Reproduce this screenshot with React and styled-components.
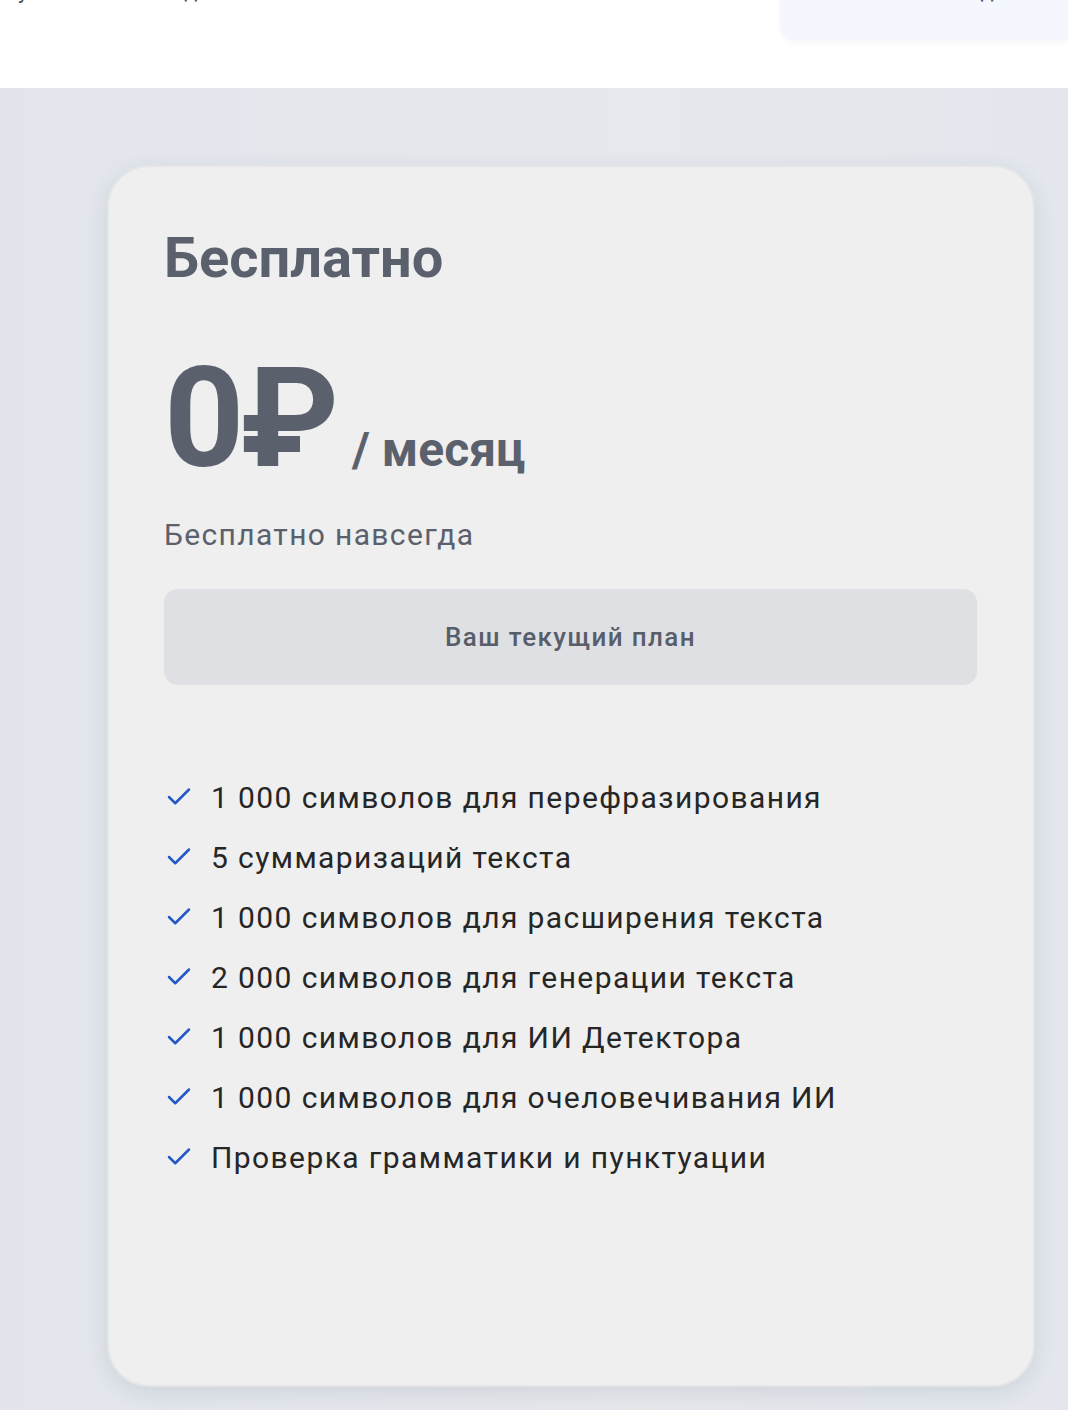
import React from 'react';
import styled, { createGlobalStyle } from 'styled-components';
import { Check } from 'lucide-react';

const GlobalStyle = createGlobalStyle`
  * { box-sizing: border-box; }
  body {
    margin: 0;
    background: #e4e7ec;
    font-family: Roboto, "Noto Sans", "Liberation Sans", sans-serif;
  }
`;

const features = [
  '1 000 символов для перефразирования',
  '5 суммаризаций текста',
  '1 000 символов для расширения текста',
  '2 000 символов для генерации текста',
  '1 000 символов для ИИ Детектора',
  '1 000 символов для очеловечивания ИИ',
  'Проверка грамматики и пунктуации',
];

const App = () => {
  return (
    <>
      <GlobalStyle />
      <Header>
        <Nav>
          <NavLabel>Русский</NavLabel>
          <NavLabel $offset={34}>Ежегодно</NavLabel>
          <ActiveTab>
            <NavLabel>Ежегодно</NavLabel>
          </ActiveTab>
        </Nav>
      </Header>
      <Main>
        <Card>
          <PlanName>Бесплатно</PlanName>
          <PriceRow>
            <Price>0₽</Price>
            <Period>/ месяц</Period>
          </PriceRow>
          <Subtitle>Бесплатно навсегда</Subtitle>
          <CurrentButton>Ваш текущий план</CurrentButton>
          <FeatureList>
            {features.map((item) => (
              <Feature key={item}>
                <Check size={30} strokeWidth={2} color="#2358c7" />
                <span>{item}</span>
              </Feature>
            ))}
          </FeatureList>
        </Card>
      </Main>
    </>
  );
};

export default App;

const Header = styled.header`
  height: 88px;
  background: #ffffff;
  overflow: hidden;
`;

const Nav = styled.nav`
  display: flex;
  align-items: flex-start;
  height: 84px;
  margin-top: -44px;
  padding-left: 4px;
`;

const NavLabel = styled.span`
  display: block;
  margin-top: 24px;
  margin-left: ${(p) => p.$offset || 0}px;
  font-size: 22px;
  line-height: 22px;
  color: #4a4f5a;
`;

const ActiveTab = styled.div`
  margin-left: auto;
  width: 288px;
  height: 84px;
  padding-left: 139px;
  background: #f4f7fe;
  border-radius: 14px 0 0 14px;
  box-shadow: 0 3px 4px rgba(60, 70, 90, 0.04);
`;

const Main = styled.main`
  padding: 77px 33px 23px 107px;
  background: linear-gradient(90deg, #e2e6ec 0%, #e6e8ec 60%, #e3e7ed 100%);
`;

const Card = styled.section`
  display: flex;
  flex-direction: column;
  align-items: flex-start;
  width: 928px;
  height: 1222px;
  padding: 63px 56px 0 55px;
  background: #efefef;
  border: 2px solid #e4e5e7;
  border-radius: 42px;
  box-shadow: 0 6px 22px rgba(40, 55, 80, 0.11);
`;

const PlanName = styled.h2`
  margin: 0;
  font-size: 56px;
  line-height: 1;
  font-weight: 700;
  color: #5b616c;
`;

const PriceRow = styled.div`
  display: flex;
  align-items: baseline;
  margin-top: 62px;
  color: #5b616c;
`;

const Price = styled.span`
  font-size: 140px;
  line-height: 1;
  font-weight: 700;
  letter-spacing: -4px;
`;

const Period = styled.span`
  margin-left: 17px;
  font-size: 48px;
  line-height: 1;
  font-weight: 700;
`;

const Subtitle = styled.p`
  margin: 32px 0 0;
  font-size: 30px;
  line-height: 1;
  letter-spacing: 1.35px;
  color: #5b616c;
`;

const CurrentButton = styled.button`
  width: 100%;
  height: 96px;
  margin-top: 39px;
  border: none;
  border-radius: 14px;
  background: #dfe0e4;
  font-family: Roboto, "Noto Sans", sans-serif;
  font-size: 26px;
  font-weight: 500;
  letter-spacing: 1.4px;
  color: #585e69;
  cursor: default;
`;

const FeatureList = styled.ul`
  list-style: none;
  margin: 82px 0 0;
  padding: 0;
`;

const Feature = styled.li`
  display: flex;
  align-items: center;
  gap: 17px;
  height: 60px;
  font-size: 30px;
  color: #262626;
  letter-spacing: 1.4px;
`;
